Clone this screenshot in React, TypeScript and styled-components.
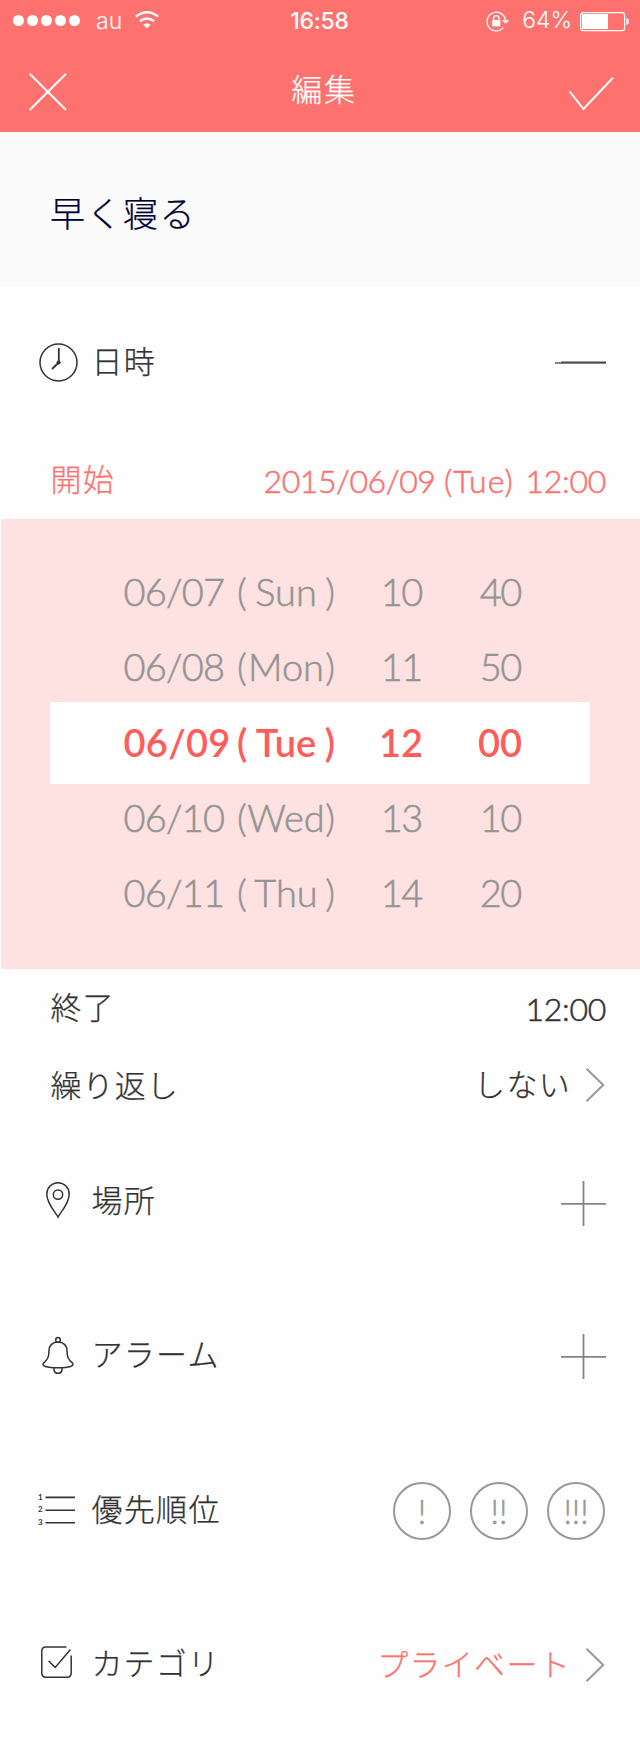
import React from "react";
import styled, { createGlobalStyle, css } from "styled-components";

const CORAL = "#fd726f";
const INK = "#333333";
const GRAY = "#999999";

const GlobalStyle = createGlobalStyle`
  *, *::before, *::after { box-sizing: border-box; }
  body { margin: 0; background: #fefefe; }
  svg { display: block; flex: none; overflow: visible; }
`;

const jpFont = css`
  font-family: "Noto Sans CJK JP", sans-serif;
  font-weight: 300;
  -webkit-text-stroke: 0.25px currentColor;
`;
const numFont = css`
  font-family: Lato, "Noto Sans CJK JP", sans-serif;
  font-weight: 300;
  -webkit-text-stroke: 0.55px currentColor;
`;

const Screen = styled.main`
  width: 640px;
  height: 1745px;
  background: #fefefe;
  color: ${INK};
  display: flex;
  flex-direction: column;
  overflow: hidden;
`;

const Header = styled.header`
  height: 132px;
  flex: none;
  background: ${CORAL};
  color: #fff;
`;

const StatusBar = styled.div`
  height: 41px;
  display: grid;
  grid-template-columns: 1fr auto 1fr;
  align-items: center;
  padding: 0 11px 0 13px;
`;

const StatusSide = styled.div<{ $end?: boolean }>`
  display: flex;
  align-items: center;
  justify-content: ${(p) => (p.$end ? "flex-end" : "flex-start")};
`;

const StatusText = styled.span<{ $weight: number; $spacing: number }>`
  font-family: Inter, sans-serif;
  font-size: 23px;
  line-height: 41px;
  font-weight: ${(p) => p.$weight};
  letter-spacing: ${(p) => p.$spacing}px;
`;

const Clocktime = styled(StatusText)`
  margin-left: -3px;
`;

const Carrier = styled(StatusText)`
  margin: 1px 13px 0 15px;
`;

const Battery = styled(StatusText)`
  margin: -1px 8px 0 12px;
`;

const NavBar = styled.div`
  height: 91px;
  display: grid;
  grid-template-columns: 1fr auto 1fr;
  align-items: center;
  padding: 0 26px 0 29px;
`;

const NavTitle = styled.h1`
  ${jpFont}
  margin: 0;
  font-size: 31px;
  line-height: 93px;
  letter-spacing: 1.8px;
  height: 91px;
  padding-left: 5px;
`;

const NavIcon = styled.div<{ $end?: boolean }>`
  display: flex;
  padding-top: ${(p) => (p.$end ? 13 : 10)}px;
  justify-content: ${(p) => (p.$end ? "flex-end" : "flex-start")};
`;

const TitleField = styled.section`
  height: 154px;
  flex: none;
  display: flex;
  align-items: center;
  padding: 5px 50px 0 50px;
  background: #fafafa;
`;

const TitleText = styled.span`
  ${jpFont}
  color: #000033;
  font-size: 35px;
  letter-spacing: 1.5px;
  line-height: 60px;
`;

const Row = styled.section<{ $height: number; $inset?: boolean }>`
  height: ${(p) => p.$height}px;
  flex: none;
  display: flex;
  align-items: center;
  padding: 0 34px 0 ${(p) => (p.$inset ? 50 : 37)}px;
`;

const IconSlot = styled.div<{ $shift?: number }>`
  width: 42px;
  display: flex;
  justify-content: center;
  padding-right: ${(p) => p.$shift ?? 0}px;
  margin-right: 12px;
`;

const Label = styled.span<{ $color?: string; $spacing?: number; $lift?: number }>`
  ${jpFont}
  color: ${(p) => p.$color ?? "inherit"};
  font-size: 31px;
  letter-spacing: ${(p) => p.$spacing ?? 1.3}px;
  line-height: 44px;
  margin-top: -${(p) => p.$lift ?? 4}px;
  padding-left: 0.5px;
`;

const Trailing = styled.div<{ $drop?: number }>`
  margin-left: auto;
  padding-top: ${(p) => p.$drop ?? 0}px;
  display: flex;
  align-items: center;
`;

const Numeric = styled.span<{ $color?: string }>`
  ${numFont}
  color: ${(p) => p.$color ?? "inherit"};
  font-size: 32px;
  line-height: 44px;
`;

const NumericPart = styled.span<{ $spacing: number; $gap?: number }>`
  letter-spacing: ${(p) => p.$spacing}px;
  margin-left: ${(p) => p.$gap ?? 0}px;
`;

const ValueText = styled(Label)`
  margin-right: 15px;
`;

const Picker = styled.section`
  height: 450px;
  flex: none;
  margin-left: 1px;
  padding: 35px 50px 0 49px;
  background: #fee1e1;
`;

const PickerRow = styled.div<{ $active?: boolean }>`
  ${numFont}
  height: ${(p) => (p.$active ? 82 : 75)}px;
  margin: ${(p) => (p.$active ? "-2px 0 -4px" : "0")};
  display: grid;
  grid-template-columns: 114px 98px 88px 99px;
  align-items: center;
  padding: 0 0 2px 73px;
  font-size: 38px;
  line-height: 46px;
  white-space: nowrap;
  color: ${(p) => (p.$active ? "#ff5c5a" : "#959493")};
  background: ${(p) => (p.$active ? "#fff" : "transparent")};
  font-weight: ${(p) => (p.$active ? 600 : 300)};
  -webkit-text-stroke-width: ${(p) => (p.$active ? 0 : 0.55)}px;
`;

const DateCell = styled.span<{ $active?: boolean }>`
  letter-spacing: ${(p) => (p.$active ? 0.3 : -0.8)}px;
  padding-left: 0.5px;
`;

const DayCell = styled.span`
  display: flex;
  justify-content: space-between;
`;

const TimeCell = styled.span<{ $active?: boolean }>`
  text-align: right;
  letter-spacing: ${(p) => (p.$active ? 0 : -1.4)}px;
  padding-right: ${(p) => (p.$active ? 0 : 1)}px;
`;

const PriorityButton = styled.button`
  ${numFont}
  position: relative;
  left: -1px;
  width: 58px;
  height: 58px;
  margin-left: 19px;
  border: 2px solid ${GRAY};
  border-radius: 50%;
  background: none;
  padding: 0;
  color: ${GRAY};
  font-size: 33px;
  line-height: 50px;
  letter-spacing: 0;
`;

const SignalDots = () => (
  <svg width="68" height="12" fill="#fff">
    {[0, 1, 2, 3, 4].map((i) => (
      <circle key={i} cx={5.5 + i * 14} cy="5.5" r="5.5" />
    ))}
  </svg>
);

const Wifi = () => (
  <svg width="24" height="20" fill="none" stroke="#fff" strokeWidth="2.4">
    <path d="M.8 5.6Q12 -3.2 23.2 5.6" />
    <path d="M4.8 10.2Q12 4.6 19.2 10.2" />
    <path d="M12 17.4L8.4 13.8Q12 10.6 15.6 13.8Z" fill="#fff" stroke="none" />
  </svg>
);

const RotationLock = () => (
  <svg width="24" height="21" fill="none" stroke="#fff" strokeWidth="1.3">
    <path d="M17.4 16.6A9.3 9.3 0 1 1 19.5 9" />
    <path d="M16 9.2H23.4L19.7 12.7Z" fill="#fff" stroke="none" />
    <rect x="6.2" y="9" width="8.2" height="6.4" fill="#fff" stroke="none" />
    <path d="M7.6 9V7.4a2.7 2.7 0 0 1 5.4 0V9" />
  </svg>
);

const BatteryIcon = () => (
  <svg width="49" height="19">
    <rect x="0.6" y="0.6" width="44" height="18" rx="2.6" fill="none" stroke="#fff" strokeWidth="1.2" />
    <rect x="2" y="2" width="26" height="15" fill="#fff" />
    <path d="M46.4 6Q49 6.8 49 9.5T46.4 13Z" fill="#fff" />
  </svg>
);

const Close = () => (
  <svg width="38" height="38" stroke="#fff" strokeWidth="2">
    <path d="M.7 .7L37 37M37 .7L.7 37" />
  </svg>
);

const Done = () => (
  <svg width="45" height="33" fill="none" stroke="#fff" strokeWidth="2">
    <path d="M.7 14.5L14.5 32L44 .8" />
  </svg>
);

const Clock = () => (
  <svg width="39" height="39" fill="none" stroke={INK} strokeWidth="1.5">
    <circle cx="19.5" cy="19.5" r="18.5" />
    <path d="M19.8 5V19.5L13 26" strokeWidth="1.8" />
    <circle cx="19.6" cy="19.5" r="2" fill={INK} stroke="none" />
  </svg>
);

const Pin = () => (
  <svg width="24" height="36" fill="none" stroke={INK} strokeWidth="1.5">
    <path d="M12 35C10.5 31.5 .8 22 .8 12A11.2 11.2 0 0 1 23.2 12C23.2 22 13.5 31.5 12 35Z" />
    <circle cx="12" cy="12.6" r="4.7" />
  </svg>
);

const Bell = () => (
  <svg width="32" height="37" fill="none" stroke={INK} strokeWidth="1.5">
    <circle cx="16" cy="2.9" r="2.3" />
    <path d="M16 5.1C10 5.1 7 9 7 13.5C7 20 5.6 22.8 1.4 26.2C-.4 29 4 30.8 16 30.8S32.4 29 30.6 26.2C26.4 22.8 25 20 25 13.5C25 9 22 5.1 16 5.1Z" />
    <path d="M12 31V33Q12.6 36.3 16 36.3T20 33V31" />
  </svg>
);

const NumberedList = () => (
  <svg width="37" height="33" stroke={INK} strokeWidth="1.6">
    <path d="M7.5 3.4H37M7.5 16.2H37M7.5 28.8H37" />
    <g fill={INK} stroke="none" fontFamily="Lato, sans-serif" fontSize="8" fontWeight="700">
      <text x="0" y="6">1</text>
      <text x="0" y="18.4">2</text>
      <text x="0" y="30.6">3</text>
    </g>
  </svg>
);

const Checkbox = () => (
  <svg width="31" height="36" fill="none" stroke={INK} strokeWidth="1.5">
    <path d="M25.5 1H5Q.8 1 .8 5V27Q.8 31.2 5 31.2H26Q30.2 31.2 30.2 27V9.5" />
    <path d="M7.6 15L14.2 21.4L29.4 3.6" />
  </svg>
);

const Plus = () => (
  <svg width="45" height="45" stroke="#858483" strokeWidth="1.8">
    <path d="M0 22.9H45M22.5 0V45" />
  </svg>
);

const Minus = () => (
  <svg width="51" height="3">
    <path d="M0 2H51" stroke="#858483" strokeWidth="1.8" />
    <path d="M6 1.3H51" stroke="#4a4948" strokeWidth="1.4" />
  </svg>
);

const Chevron = () => (
  <svg width="20" height="34" fill="none" stroke={GRAY} strokeWidth="2">
    <path d="M.5 .8L17.2 17L.5 33.2" />
  </svg>
);

const pickerRows = [
  { date: "06/07", day: ["(", "Sun", ")"], hour: "10", minute: "40" },
  { date: "06/08", day: ["(", "Mon", ")"], hour: "11", minute: "50" },
  { date: "06/09", day: ["(", "Tue", ")"], hour: "12", minute: "00", active: true },
  { date: "06/10", day: ["(", "Wed", ")"], hour: "13", minute: "10" },
  { date: "06/11", day: ["(", "Thu", ")"], hour: "14", minute: "20" },
];

export default function App() {
  return (
    <Screen>
      <GlobalStyle />
      <Header>
        <StatusBar>
          <StatusSide>
            <SignalDots />
            <Carrier $weight={300} $spacing={0}>au</Carrier>
            <Wifi />
          </StatusSide>
          <Clocktime $weight={500} $spacing={-0.2}>16:58</Clocktime>
          <StatusSide $end>
            <RotationLock />
            <Battery $weight={300} $spacing={0}>64%</Battery>
            <BatteryIcon />
          </StatusSide>
        </StatusBar>
        <NavBar>
          <NavIcon><Close /></NavIcon>
          <NavTitle>編集</NavTitle>
          <NavIcon $end><Done /></NavIcon>
        </NavBar>
      </Header>

      <TitleField>
        <TitleText>早く寝る</TitleText>
      </TitleField>

      <Row $height={152}>
        <IconSlot><Clock /></IconSlot>
        <Label>日時</Label>
        <Trailing><Minus /></Trailing>
      </Row>
      <Row $height={81} $inset>
        <Label $color={CORAL} $lift={2}>開始</Label>
        <Trailing $drop={4}>
          <Numeric $color={CORAL}>
            <NumericPart $spacing={-0.45}>2015/06/09</NumericPart>{" "}
            <NumericPart $spacing={1}>(Tue)</NumericPart>{" "}
            <NumericPart $spacing={-0.3} $gap={3}>12:00</NumericPart>
          </Numeric>
        </Trailing>
      </Row>

      <Picker>
        {pickerRows.map((r) => (
          <PickerRow key={r.date} $active={r.active}>
            <DateCell $active={r.active}>{r.date}</DateCell>
            <DayCell>
              {r.day.map((part) => <span key={part}>{part}</span>)}
            </DayCell>
            <TimeCell $active={r.active}>{r.hour}</TimeCell>
            <TimeCell $active={r.active}>{r.minute}</TimeCell>
          </PickerRow>
        ))}
      </Picker>

      <Row $height={78} $inset>
        <Label>終了</Label>
        <Trailing $drop={2}>
          <Numeric><NumericPart $spacing={-0.3}>12:00</NumericPart></Numeric>
        </Trailing>
      </Row>
      <Row $height={76} $inset>
        <Label $spacing={1.1} $lift={3}>繰り返し</Label>
        <Trailing>
          <ValueText>しない</ValueText>
          <Chevron />
        </Trailing>
      </Row>
      <Row $height={154}>
        <IconSlot><Pin /></IconSlot>
        <Label $lift={2}>場所</Label>
        <Trailing $drop={7}><Plus /></Trailing>
      </Row>
      <Row $height={156}>
        <IconSlot><Bell /></IconSlot>
        <Label>アラーム</Label>
        <Trailing $drop={3}><Plus /></Trailing>
      </Row>
      <Row $height={154}>
        <IconSlot $shift={4}><NumberedList /></IconSlot>
        <Label>優先順位</Label>
        <Trailing $drop={2}>
          <PriorityButton>!</PriorityButton>
          <PriorityButton>!!</PriorityButton>
          <PriorityButton>!!!</PriorityButton>
        </Trailing>
      </Row>
      <Row $height={154}>
        <IconSlot $shift={4}><Checkbox /></IconSlot>
        <Label $spacing={1.1} $lift={5}>カテゴリ</Label>
        <Trailing $drop={1}>
          <ValueText $color={CORAL}>プライベート</ValueText>
          <Chevron />
        </Trailing>
      </Row>
    </Screen>
  );
}
